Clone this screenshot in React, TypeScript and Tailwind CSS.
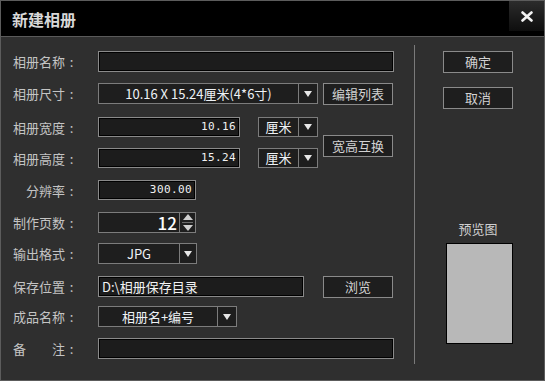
import React from "react";

const font = { fontFamily: '"Noto Sans CJK SC", "Noto Sans", sans-serif' };

function Label({ text }: { text: string }) {
  return (
    <div className="w-[86px] h-[21px] flex items-center shrink-0">
      <div className="w-[66px] flex justify-end text-[13px] text-[#c4c4c4]">
        <span className="whitespace-pre">{text}</span>
        <span className="w-[13px] text-center">:</span>
      </div>
    </div>
  );
}

function Field({ w, h = 21, value, align = "right", mono = false }: { w: number; h?: number; value?: string; align?: "left" | "right"; mono?: boolean }) {
  return (
    <div
      className={`border border-[#8a8a8a] bg-[#1c1c1c] shadow-[inset_0_0_0_1px_#000] flex items-center px-[3px] text-[#f2f2f2] ${align === "right" ? "justify-end" : "justify-start"}`}
      style={{ width: w, height: h }}
    >
      <span
        className={mono ? "text-[11px] tracking-[0.4px]" : "text-[13px]"}
        style={mono ? { fontFamily: '"DejaVu Sans Mono", "Noto Sans CJK SC", monospace' } : undefined}
      >
        {value}
      </span>
    </div>
  );
}

function Arrow() {
  return (
    <svg width="8" height="6" viewBox="0 0 8 6">
      <polygon points="0,0 8,0 4,6" fill="#e6e6e6" />
    </svg>
  );
}

function Combo({ w, h = 21, value, arrowW = 19 }: { w: number; h?: number; value: string; arrowW?: number }) {
  return (
    <div className="border border-[#7c7c7c] bg-[#1e1e1e] flex" style={{ width: w, height: h }}>
      <div className="flex-1 flex items-center justify-center text-[13px] text-[#eef2f6]">{value}</div>
      <div className="border-l border-[#7c7c7c] flex items-center justify-center" style={{ width: arrowW }}>
        <Arrow />
      </div>
    </div>
  );
}

function Btn({ text }: { text: string }) {
  return (
    <div className="w-[70px] h-[22px] border border-[#8a8a8a] bg-[#1e1e1e] flex items-center justify-center text-[13px] text-[#d2d2d2]">
      {text}
    </div>
  );
}

export default function App() {
  return (
    <div className="w-[545px] h-[381px] border border-[#5c5c5c] bg-[#2f2f2f] flex flex-col overflow-hidden" style={font}>
      <div className="h-[36px] bg-black border-b border-[#5a5a5a] flex items-start shrink-0">
        <div className="flex-1 h-full flex items-center pl-[11px] text-[16px] font-bold text-[#d8d8d8]">新建相册</div>
        <div className="w-[35px] h-[30px] bg-gradient-to-b from-[#2c2c2c] to-[#0e0e0e] flex items-center justify-center">
          <svg width="12" height="11" viewBox="0 0 12 11">
            <path d="M1.5 1.5 L10.5 9.5 M10.5 1.5 L1.5 9.5" stroke="#f2f2f2" strokeWidth="2.6" strokeLinecap="round" />
          </svg>
        </div>
      </div>

      <div className="flex flex-1">
        <div className="w-[413px] pl-[11px] pt-[14px] flex flex-col">
          <div className="h-[32px] flex items-start">
            <Label text="相册名称" />
            <Field w={296} />
          </div>
          <div className="h-[34px] flex items-start">
            <Label text="相册尺寸" />
            <Combo w={220} value="10.16 X 15.24厘米(4*6寸)" />
            <div className="ml-[5px]">
              <Btn text="编辑列表" />
            </div>
          </div>
          <div className="h-[63px] flex items-start">
            <div className="flex flex-col gap-[10px]">
              <div className="flex items-start">
                <Label text="相册宽度" />
                <Field w={142} h={20} value="10.16" mono />
                <div className="ml-[18px]">
                  <Combo w={60} h={20} value="厘米" />
                </div>
              </div>
              <div className="flex items-start">
                <Label text="相册高度" />
                <Field w={142} h={20} value="15.24" mono />
                <div className="ml-[18px]">
                  <Combo w={60} h={20} value="厘米" />
                </div>
              </div>
            </div>
            <div className="ml-[5px] mt-[18px]">
              <Btn text="宽高互换" />
            </div>
          </div>
          <div className="h-[32px] flex items-start">
            <Label text="分辨率" />
            <Field w={98} h={20} value="300.00" mono />
          </div>
          <div className="h-[31px] flex items-start">
            <Label text="制作页数" />
            <div className="w-[98px] h-[21px] border border-[#7c7c7c] bg-[#1e1e1e] flex">
              <div className="flex-1 flex items-center justify-end pr-[2px] text-[17px] font-medium text-white">12</div>
              <div className="w-[16px] border-l border-[#7c7c7c] flex flex-col items-center justify-center gap-[2px]">
                <svg width="10" height="6" viewBox="0 0 10 6">
                  <polygon points="5,0 10,6 0,6" fill="#cfcfcf" />
                </svg>
                <div className="w-[11px] h-px bg-[#6a6a6a]" />
                <svg width="10" height="6" viewBox="0 0 10 6">
                  <polygon points="0,0 10,0 5,6" fill="#cfcfcf" />
                </svg>
              </div>
            </div>
          </div>
          <div className="h-[33px] flex items-start">
            <Label text="输出格式" />
            <Combo w={99} h={21} value="JPG" arrowW={17} />
          </div>
          <div className="h-[30px] flex items-start">
            <Label text="保存位置" />
            <Field w={206} value="D:\相册保存目录" align="left" />
            <div className="ml-[19px]">
              <Btn text="浏览" />
            </div>
          </div>
          <div className="h-[32px] flex items-start">
            <Label text="成品名称" />
            <Combo w={139} value="相册名+编号" />
          </div>
          <div className="h-[22px] flex items-start">
            <Label text="备　　注" />
            <Field w={296} h={21} />
          </div>
        </div>

        <div className="w-px bg-[#7a7a7a] mt-[8px] mb-[16px]" />

        <div className="flex-1 pl-[28px] pt-[14px] flex flex-col">
          <Btn text="确定" />
          <div className="mt-[14px]">
            <Btn text="取消" />
          </div>
          <div className="mt-[110px] w-[70px] text-center text-[13px] text-[#cfcfcf]">预览图</div>
          <div className="ml-[3px] mt-[4px] w-[67px] h-[101px] bg-[#b8b8b8] border border-black" />
        </div>
      </div>
    </div>
  );
}
